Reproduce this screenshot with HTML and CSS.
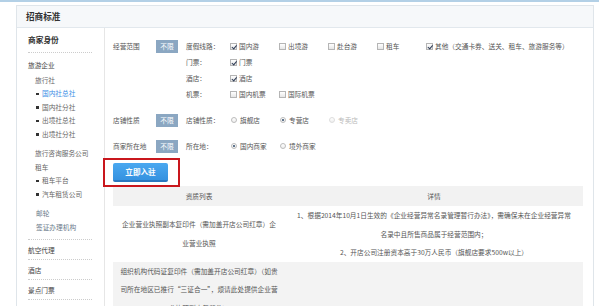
FILE: index.html
```html
<!DOCTYPE html>
<html lang="zh-CN">
<head>
    <meta charset="utf-8">
    <title>招商标准</title>
    <link rel="stylesheet" href="styles.css">
</head>
<body>
    <div class="topline"></div>
    <div class="panel">
        <div class="panel-hd">招商标准</div>
        <div class="panel-bd">
            <div class="side">
                <div class="side-title">商家身份</div>
                <div class="side-group">
                    <div class="cat">旅游企业</div>
                    <div class="sub-cat first">旅行社</div>
                    <ul class="bullets">
                        <li class="active">国内社总社</li>
                        <li>国内社分社</li>
                        <li>出境社总社</li>
                        <li>出境社分社</li>
                    </ul>
                    <div class="sub-cat">旅行咨询服务公司</div>
                    <div class="sub-cat">租车</div>
                    <ul class="bullets">
                        <li>租车平台</li>
                        <li>汽车租赁公司</li>
                    </ul>
                    <div class="sub-cat muted">邮轮</div>
                    <div class="sub-cat muted">签证办理机构</div>
                </div>
                <div class="side-item">航空代理</div>
                <div class="side-item">酒店</div>
                <div class="side-item">景点门票</div>
            </div>

            <div class="main">
                <div class="row">
                    <div class="row-label">经营范围</div>
                    <div class="tag">不限</div>
                    <div class="fields">
                        <div class="field">
                            <div class="field-label">度假线路：</div>
                            <span class="opt"><i class="cb on"></i>国内游</span>
                            <span class="opt"><i class="cb"></i>出境游</span>
                            <span class="opt"><i class="cb"></i>赴台游</span>
                            <span class="opt"><i class="cb"></i>租车</span>
                            <span class="opt wide"><i class="cb on"></i>其他（交通卡券、送关、租车、旅游服务等）</span>
                        </div>
                        <div class="field">
                            <div class="field-label">门票：</div>
                            <span class="opt"><i class="cb on"></i>门票</span>
                        </div>
                        <div class="field">
                            <div class="field-label">酒店：</div>
                            <span class="opt"><i class="cb on"></i>酒店</span>
                        </div>
                        <div class="field">
                            <div class="field-label">机票：</div>
                            <span class="opt"><i class="cb"></i>国内机票</span>
                            <span class="opt"><i class="cb"></i>国际机票</span>
                        </div>
                    </div>
                </div>

                <div class="row">
                    <div class="row-label">店铺性质</div>
                    <div class="tag">不限</div>
                    <div class="fields">
                        <div class="field">
                            <div class="field-label">店铺性质：</div>
                            <span class="opt"><i class="rd"></i>旗舰店</span>
                            <span class="opt"><i class="rd on"></i>专营店</span>
                            <span class="opt disabled"><i class="rd"></i>专卖店</span>
                        </div>
                    </div>
                </div>

                <div class="row last">
                    <div class="row-label">商家所在地</div>
                    <div class="tag">不限</div>
                    <div class="fields">
                        <div class="field">
                            <div class="field-label">所在地：</div>
                            <span class="opt"><i class="rd on"></i>国内商家</span>
                            <span class="opt"><i class="rd"></i>境外商家</span>
                        </div>
                    </div>
                </div>

                <div class="act">
                    <button class="btn">立即入驻</button>
                    <span class="mark"></span>
                </div>

                <table class="qual">
                    <colgroup>
                        <col class="c1">
                        <col class="c2">
                    </colgroup>
                    <tr>
                        <th>资质列表</th>
                        <th>详情</th>
                    </tr>
                    <tr>
                        <td>企业营业执照副本复印件（需加盖开店公司红章）企业营业执照</td>
                        <td class="detail">1、根据2014年10月1日生效的《企业经营异常名录管理暂行办法》，需确保未在企业经营异常<br>名录中且所售商品属于经营范围内；<br>2、开店公司注册资本高于30万人民币（旗舰店要求500w以上）</td>
                    </tr>
                    <tr class="alt">
                        <td>组织机构代码证复印件（需加盖开店公司红章）（如贵司所在地区已推行“三证合一”，烦请此处提供企业营业执照副本复印件）</td>
                        <td class="detail"></td>
                    </tr>
                </table>
            </div>
        </div>
    </div>
</body>
</html>
```

FILE: styles.css
```css
body {
    margin: 0;
    font-family: "Noto Sans CJK SC", "Noto Sans", sans-serif;
    font-size: 6.7px;
    color: #666;
    background: #fff;
    overflow: hidden;
}
.topline {
    height: 2px;
    background: #b3d0e6;
}
.panel {
    margin: 3px 5px 0 16px;
    border: 1px solid #dfe5ea;
    height: 420px;
}
.panel-hd {
    height: 21px;
    line-height: 21px;
    padding-left: 9px;
    background: #f6f8fa;
    border-bottom: 1px solid #e2e8ed;
    font-size: 8.6px;
    font-weight: bold;
    color: #333;
}
.panel-bd {
    display: flex;
    height: 100%;
}

/* 左侧身份列表 */
.side {
    width: 88px;
    box-sizing: border-box;
    border-right: 1px solid #e6e6e6;
    padding: 5px 12px 0 11px;
}
.side-title {
    font-size: 7.7px;
    font-weight: bold;
    color: #333;
    line-height: 14px;
    padding-bottom: 5px;
    border-bottom: 1px dotted #ccc;
}
.side-group {
    padding-bottom: 5px;
    border-bottom: 1px dotted #ccc;
}
.cat {
    margin-top: 5px;
    line-height: 14px;
    color: #444;
}
.sub-cat {
    padding-left: 7px;
    line-height: 14px;
    color: #666;
}
.sub-cat.first {
    margin-top: 1px;
}
.sub-cat.muted {
    color: #6b7a8a;
    padding-left: 8px;
}
.bullets {
    list-style: none;
    margin: 0 0 5px;
    padding-left: 8px;
    line-height: 13.5px;
    color: #666;
}
.bullets + .sub-cat.muted {
    margin-top: 1px;
}
.bullets li::before {
    content: '';
    display: inline-block;
    width: 2.5px;
    height: 2.5px;
    background: #333;
    margin-right: 3.5px;
    vertical-align: middle;
}
.bullets li.active {
    color: #3a8ee6;
}
.side-item {
    padding: 4px 0 2px;
    line-height: 13px;
    color: #444;
    border-bottom: 1px dotted #ccc;
}

/* 右侧条件 */
.main {
    flex: 1;
    padding: 10px 9px 0 8px;
}
.row {
    display: flex;
    margin-bottom: 10px;
}
.row.last {
    margin-bottom: 9px;
}
.row-label {
    width: 43px;
    line-height: 16px;
    color: #555;
}
.tag {
    width: 22px;
    height: 13px;
    line-height: 13px;
    margin: 1.5px 8px 0 0;
    background: #8ba7c2;
    color: #fff;
    text-align: center;
}
.fields {
    flex: 1;
}
.field {
    display: flex;
    line-height: 16px;
    color: #555;
}
.field-label {
    width: 44px;
}
.opt {
    width: 49px;
    display: flex;
    align-items: center;
    white-space: nowrap;
}
.opt.wide {
    width: auto;
}
.opt.disabled {
    color: #bbb;
}
.cb {
    width: 7px;
    height: 7px;
    box-sizing: border-box;
    border: 1px solid #b5b5b5;
    background: linear-gradient(#fff, #e6e6e6);
    margin-right: 2px;
    position: relative;
}
.cb.on::after {
    content: '';
    position: absolute;
    left: 1.6px;
    top: 0;
    width: 1.5px;
    height: 3.5px;
    border: solid #2d3b55;
    border-width: 0 1px 1px 0;
    transform: rotate(40deg);
}
.rd {
    width: 6px;
    height: 6px;
    box-sizing: border-box;
    border-radius: 50%;
    border: 1px solid #bbb;
    background: linear-gradient(#fff, #eee);
    margin: 0 3px 0 1px;
    position: relative;
}
.rd.on::after {
    content: '';
    position: absolute;
    left: 1px;
    top: 1px;
    width: 2px;
    height: 2px;
    border-radius: 50%;
    background: #2e4a6a;
}
.opt.disabled .rd {
    border-color: #ddd;
}

.act {
    position: relative;
    display: inline-block;
    vertical-align: top;
}
.btn {
    display: block;
    width: 55px;
    height: 19px;
    padding: 0;
    border: none;
    border-bottom: 2px solid #2a78bf;
    border-radius: 2px;
    background: linear-gradient(#4aa8f0, #3592e0);
    color: #fff;
    font-family: "Noto Sans CJK SC", sans-serif;
    font-size: 7.6px;
    font-weight: bold;
}
.mark {
    position: absolute;
    left: -10px;
    top: -5px;
    right: -12px;
    bottom: -5px;
    border: 2px solid #c9171d;
}

/* 资质表 */
.qual {
    width: 470px;
    margin-top: 4px;
    border-collapse: collapse;
    table-layout: fixed;
}
.qual .c1 {
    width: 172px;
}
.qual .c2 {
    width: 298px;
}
.qual th {
    height: 20px;
    padding: 0;
    background: #f2f2f2;
    font-weight: normal;
    color: #555;
}
.qual td {
    padding: 0 7px;
    line-height: 18.5px;
    text-align: center;
    vertical-align: middle;
    color: #555;
}
.qual td.detail {
    padding: 0 4px;
}
.qual tr.alt td {
    background: #f3f3f3;
    vertical-align: top;
    height: 80px;
}
```
